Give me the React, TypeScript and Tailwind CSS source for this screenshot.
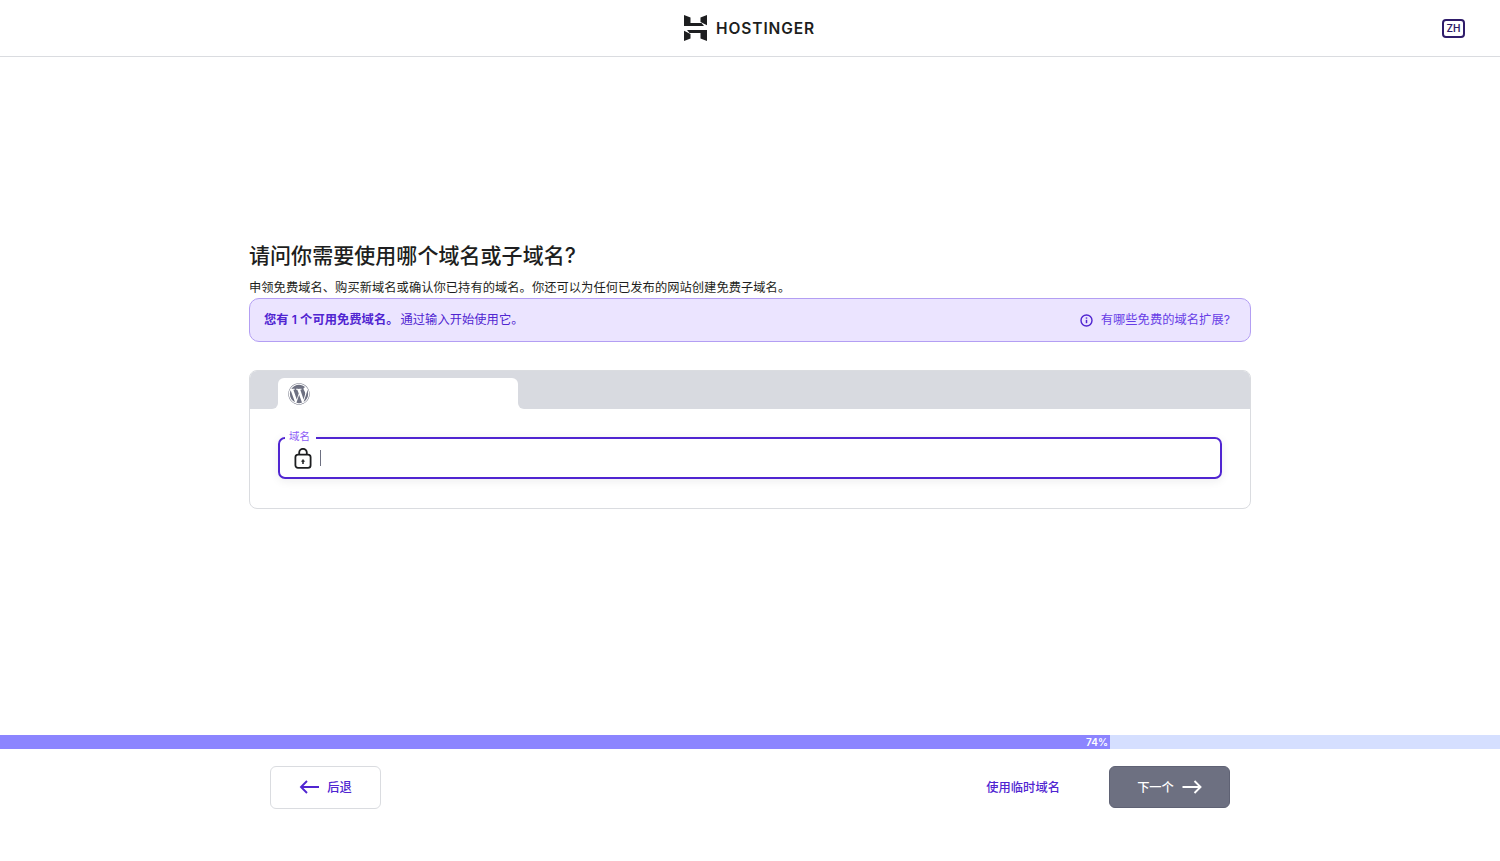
import { FaWordpress } from 'react-icons/fa'

function Logo() {
    return (
        <svg width="23" height="26" viewBox="0 0 23 26" fill="#1d1e20">
            <path d="M0 0 L6.5 2.6 V8 H17.5 L20 11 H0 Z" />
            <path d="M16.5 2.6 L23 0 V10.2 L16.5 7 Z" />
            <g transform="rotate(180 11.5 13)">
                <path d="M0 0 L6.5 2.6 V8 H17.5 L20 11 H0 Z" />
                <path d="M16.5 2.6 L23 0 V10.2 L16.5 7 Z" />
            </g>
        </svg>
    )
}

function ArrowIcon({ dir }: { dir: 'left' | 'right' }) {
    return (
        <svg width="20" height="14" viewBox="0 0 20 14" fill="none" stroke="currentColor" strokeWidth="1.9" className={dir === 'left' ? 'mb-[2px]' : ''}>
            {dir === 'left' ? <path d="M20 7H2M8 1L2 7l6 6" /> : <path d="M.5 7h18M12.5 1l6 6-6 6" />}
        </svg>
    )
}

function LockIcon() {
    return (
        <svg width="18" height="21" viewBox="0 0 18 21" fill="none" stroke="#1d1e20" strokeWidth="1.8">
            <rect x="1.4" y="6.6" width="15.2" height="13.2" rx="2.6" />
            <path d="M5.2 6.6V4.6a3.8 3.8 0 0 1 7.6 0v2" />
            <path d="M9 16v-3.2" strokeWidth="1.5" />
            <path d="M7.5 13.4L9 11.4l1.5 2z" fill="#1d1e20" strokeWidth="0.6" />
        </svg>
    )
}

function InfoIcon() {
    return (
        <svg width="13" height="13" viewBox="0 0 13 13" fill="none" stroke="#5025d1">
            <circle cx="6.5" cy="6.5" r="5.5" strokeWidth="1.4" />
            <path d="M6.5 5.8v3.4" strokeWidth="1.5" />
            <path d="M6.5 3.4v1.3" strokeWidth="1.5" />
        </svg>
    )
}

export default function App() {
    return (
        <div className="h-[861px] bg-white flex flex-col overflow-hidden font-['Inter','Noto_Sans_CJK_SC',sans-serif] text-[#1d1e20]">
            <header className="h-[57px] shrink-0 border-b border-[#dadce0] flex items-center justify-between pl-[684px] pr-[35px]">
                <div className="flex items-center gap-[9px]">
                    <Logo />
                    <span className="text-[15.5px] font-semibold tracking-[0.9px] leading-none pt-[2px]">HOSTINGER</span>
                </div>
                <div className="w-[23px] h-[19px] border-2 border-[#2f1c6a] rounded-[4px] flex items-center justify-center text-[10px] leading-none font-semibold text-[#2f1c6a]">
                    ZH
                </div>
            </header>

            <main className="flex-1 pt-[187px]">
                <div className="w-[1002px] mx-auto">
                    <h1 className="text-[21px] tracking-[0.05px] leading-[24px] font-medium">请问你需要使用哪个域名或子域名?</h1>
                    <p className="text-[12.25px] tracking-[0.05px] leading-[18px] mt-[11px]">
                        申领免费域名、购买新域名或确认你已持有的域名。你还可以为任何已发布的网站创建免费子域名。
                    </p>

                    <div className="h-[44px] mt-[1px] bg-[#ebe4ff] border border-[#b39ef3] rounded-[10px] flex items-center justify-between pl-[14px] pr-[20px] text-[12.25px] tracking-[0.05px]">
                        <p className="text-[#5025d1]">
                            <span className="font-semibold">您有 1 个可用免费域名。</span>
                            <span className="ml-[2px]">通过输入开始使用它。</span>
                        </p>
                        <div className="flex items-center gap-[8px] text-[#673de6]">
                            <InfoIcon />
                            <span>有哪些免费的域名扩展?</span>
                        </div>
                    </div>

                    <section className="mt-[28px] h-[139px] border border-[#dadce0] rounded-[8px] overflow-hidden">
                        <div className="flex h-[38px]">
                            <div className="w-[28px] bg-[#d8dae0] rounded-br-[6px]" />
                            <div className="w-[240px] bg-[#d8dae0] pt-[7px]">
                                <div className="h-[31px] bg-white rounded-t-[6px] flex items-center pl-[10px]">
                                    <FaWordpress className="w-[22px] h-[22px] text-[#6d7081]" />
                                </div>
                            </div>
                            <div className="flex-1 bg-[#d8dae0] rounded-bl-[6px]" />
                        </div>

                        <div className="px-[28px] pt-[28px]">
                            <div className="relative h-[42px] border-2 border-[#5025d1] rounded-[7px] flex items-center pl-[14px] gap-[8px] shadow-[0_2px_10px_rgba(29,30,32,0.08)]">
                                <span className="absolute -top-[8px] left-[5px] bg-white pl-[4px] pr-[6px] text-[10.5px] leading-[12px] text-[#8c5cf6]">域名</span>
                                <LockIcon />
                                <span className="w-px h-[16px] bg-[#6d7081]" />
                            </div>
                        </div>
                    </section>
                </div>
            </main>

            <div className="h-[14px] shrink-0 bg-[#d5dfff]">
                <div className="w-[74%] h-full bg-[#8c85ff] flex items-center justify-end pr-[2px] text-[10px] leading-[12px] font-semibold text-white">74%</div>
            </div>

            <footer className="h-[112px] shrink-0 pt-[17px]">
                <div className="w-[960px] mx-auto flex items-start justify-between">
                    <button className="w-[111px] h-[43px] bg-white border border-[#dadce0] rounded-[6px] flex items-center justify-center gap-[8px] text-[12.25px] font-medium text-[#5025d1]">
                        <ArrowIcon dir="left" />
                        <span className="pt-[1px]">后退</span>
                    </button>
                    <div className="flex items-center gap-[49px]">
                        <button className="pt-[2px] text-[12.25px] tracking-[0.05px] font-medium text-[#5025d1]">使用临时域名</button>
                        <button className="w-[121px] h-[42px] bg-[#6d7081] border border-[#5f6274] rounded-[6px] flex items-center justify-center gap-[8px] text-[12.25px] font-medium text-white">
                            <span className="pt-[2px]">下一个</span>
                            <ArrowIcon dir="right" />
                        </button>
                    </div>
                </div>
            </footer>
        </div>
    )
}
